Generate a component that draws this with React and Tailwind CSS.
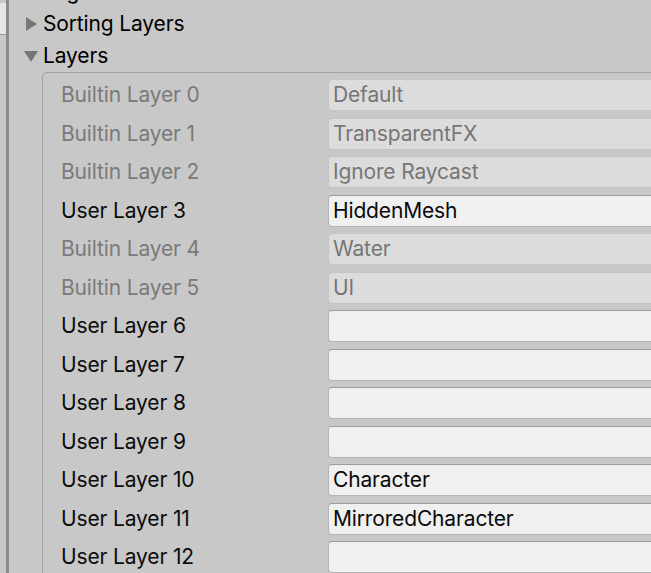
import React from "react";

const layers = [
  { label: "Builtin Layer 0", value: "Default", builtin: true },
  { label: "Builtin Layer 1", value: "TransparentFX", builtin: true },
  { label: "Builtin Layer 2", value: "Ignore Raycast", builtin: true },
  { label: "User Layer 3", value: "HiddenMesh" },
  { label: "Builtin Layer 4", value: "Water", builtin: true },
  { label: "Builtin Layer 5", value: "UI", builtin: true },
  { label: "User Layer 6", value: "" },
  { label: "User Layer 7", value: "" },
  { label: "User Layer 8", value: "" },
  { label: "User Layer 9", value: "" },
  { label: "User Layer 10", value: "Character" },
  { label: "User Layer 11", value: "MirroredCharacter" },
  { label: "User Layer 12", value: "" },
  { label: "User Layer 13", value: "" },
];

const Arrow = ({ open }) => (
  <svg width="16" height="16" viewBox="0 0 16 16" className="shrink-0">
    {open ? (
      <polygon points="1,3 15,3 8,14" fill="#767676" />
    ) : (
      <polygon points="2,1 13,8 2,15" fill="#767676" />
    )}
  </svg>
);

const LayerRow = ({ label, value, builtin }) => (
  <div className="flex items-center h-[32px] shrink-0">
    <div
      className={`w-[267px] shrink-0 ${builtin ? "text-[#7a7a7a]" : "text-[#0c0c0c]"}`}
    >
      {label}
    </div>
    <div
      className={`flex-1 h-[32px] flex items-center pl-[4px] rounded-[4px] border ${
        builtin
          ? "bg-[#dcdcdc] border-[#c4c4c4] text-[#767676]"
          : "bg-[#f0f0f0] border-[#b4b4b4] border-t-[#9c9c9c] text-[#0a0a0a]"
      }`}
    >
      {value}
    </div>
  </div>
);

export default function App() {
  return (
    <div
      className="flex w-[651px] h-[573px] overflow-hidden bg-[#c8c8c8] text-[21px] tracking-[-0.15px]"
      style={{ fontFamily: "Inter, 'Noto Sans', sans-serif" }}
    >
      {/* side strip */}
      <div className="w-[6px] shrink-0 flex flex-col">
        <div className="h-[3px] shrink-0" />
        <div className="h-[32px] shrink-0 bg-[#e6e6e6] border-b border-[#999]" />
      </div>
      <div className="w-[3px] shrink-0 bg-[#8a8a8a]" />

      <div className="flex-1 min-w-0 flex flex-col -mt-[24px]">
        <div className="flex items-center h-[32px] shrink-0 pl-[14px] gap-[4px]">
          <Arrow open />
          <span>Tags</span>
        </div>
        <div className="flex items-center h-[32px] shrink-0 pl-[15px] gap-[3px]">
          <Arrow />
          <span>Sorting Layers</span>
        </div>
        <div className="flex items-center h-[32px] shrink-0 pl-[14px] gap-[4px]">
          <Arrow open />
          <span>Layers</span>
        </div>

        <div className="shrink-0 ml-[33px] -mr-[12px] border border-[#a3a3a3] rounded-[5px] pt-[6px] pl-[18px] flex flex-col gap-[6.5px]">
          {layers.map((l) => (
            <LayerRow key={l.label} {...l} />
          ))}
        </div>
      </div>
    </div>
  );
}
